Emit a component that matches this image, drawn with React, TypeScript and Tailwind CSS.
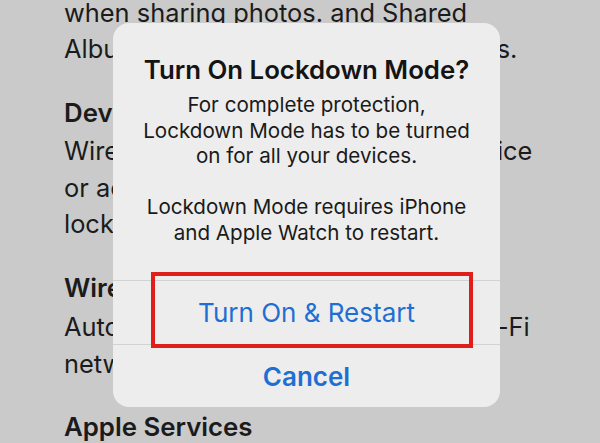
import React from "react";

export default function App() {
  return (
    <div
      className="relative w-[600px] h-[443px] overflow-hidden bg-[#cacaca] text-[#1b1b1b]"
      style={{ fontFamily: "Inter, 'Noto Sans', sans-serif" }}
    >
      <div className="pl-[64px] -mt-[5.5px] text-[25.4px] leading-[36.5px] whitespace-nowrap">
        <div>
          <div>when sharing photos. and Shared</div>
          <div>Albums are removed from the Photos.</div>
        </div>
        <div className="mt-[27px] text-[25.8px] font-semibold">Device Connections</div>
        <div className="mt-[2px]">
          <div>Wired connections with another device</div>
          <div>or accessory are blocked when</div>
          <div>locked.</div>
        </div>
        <div className="mt-[27px] text-[25.8px] font-semibold">Wireless Connectivity</div>
        <div className="mt-[3px]">
          <div>Automatically joining non-secure Wi-Fi</div>
          <div>networks is disabled.</div>
        </div>
        <div className="mt-[27px] text-[25.8px] font-semibold">Apple Services</div>
      </div>

      <div className="absolute left-[113px] top-[23px] w-[387px] h-[384px] rounded-[16px] bg-[#ededed] flex flex-col">
        <div className="pt-[32px] px-2 text-center">
          <div className="text-[25.8px] leading-[30px] font-semibold text-[#141414] whitespace-nowrap">
            Turn On Lockdown Mode?
          </div>
          <div className="mt-[7px] text-[20.6px] leading-[25.6px] text-[#1a1a1a] whitespace-nowrap">
            For complete protection,
            <br />
            Lockdown Mode has to be turned
            <br />
            on for all your devices.
            <br />
            <br />
            Lockdown Mode requires iPhone
            <br />
            and Apple Watch to restart.
          </div>
        </div>
        <div className="mt-auto">
          <div className="h-[64px] border-t border-[#d2d2d2] flex items-center justify-center text-[26px] text-[#1f6fd3]">
            Turn On &amp; Restart
          </div>
          <div className="h-[63px] border-t border-[#d2d2d2] flex items-center justify-center text-[26px] font-semibold text-[#1f6fd3]">
            Cancel
          </div>
        </div>
        <div className="absolute left-[38px] top-[249px] w-[322px] h-[76px] border-[4px] border-[#e01f1a]" />
      </div>
    </div>
  );
}
